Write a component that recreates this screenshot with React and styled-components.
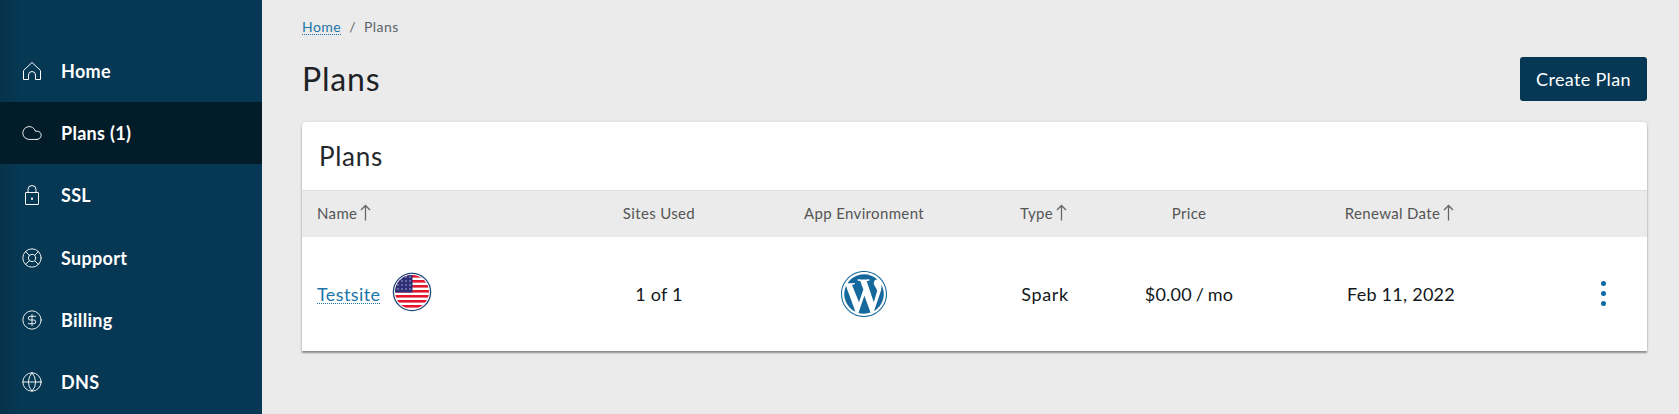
import React from "react";
import styled, { createGlobalStyle } from "styled-components";
import { Cloud, LifeBuoy, CircleDollarSign, Globe } from "lucide-react";

const Global = createGlobalStyle`
  html, body { margin: 0; padding: 0; height: 414px; overflow: hidden; background: #ebebeb; }
  body { font-family: "Lato", "Open Sans", sans-serif; }
`;
const Page = styled.div`display: flex; width: 1679px; height: 414px; overflow: hidden;`;
const Sidebar = styled.nav`
  width: 262px; flex: none; padding-top: 40px; box-sizing: border-box;
  background: linear-gradient(90deg, #053349 0, #063753 20px, #063755 100%);
`;
const NavItem = styled.div`
  display: flex; align-items: center; height: 62.2px; padding-left: 20px; gap: 17px;
  background: ${p => (p.$active ? "#031c29" : "transparent")};
  color: #fff; font-size: 18px; font-weight: 700; letter-spacing: .3px;
`;
const IconBox = styled.span`
  display: flex; align-items: center; justify-content: center; width: 24px; height: 24px; flex: none;
`;
const Main = styled.main`flex: 1; padding: 0 32px 0 40px; min-width: 0;`;
const Crumbs = styled.div`
  display: flex; gap: 8px; padding-top: 18px; height: 18px; line-height: 18px;
  font-size: 14px; letter-spacing: .45px; color: #5b646b;
`;
const Link = styled.a`
  color: #1b75a8; text-decoration: underline dotted; text-underline-offset: 2px;
  text-decoration-thickness: 1px;
`;
const TitleRow = styled.div`
  display: flex; justify-content: space-between; align-items: flex-start; height: 86px; padding-top: 21px;
  box-sizing: border-box;
`;
const Title = styled.h1`
  margin: 0; font-size: 32px; line-height: 44px; font-weight: 400; letter-spacing: .8px; color: #1d2227;
`;
const Button = styled.button`
  width: 127px; height: 44px; border: 0; border-radius: 3px; background: #063755; color: #fff; padding: 0;
  font: 400 18px "Lato", sans-serif; letter-spacing: .35px;
`;
const Card = styled.section`
  background: #fff; border-radius: 4px 4px 0 0; height: 229px; overflow: hidden;
  box-shadow: 0 2px 2px rgba(0,0,0,.38), 0 0 3px rgba(0,0,0,.1);
`;
const CardTitle = styled.h2`
  margin: 0; height: 68px; line-height: 68px; padding-left: 17px; font-size: 26px; font-weight: 400;
  letter-spacing: .7px; color: #23282d; box-sizing: border-box;
`;
const Row = styled.div`
  display: grid; grid-template-columns: 238px 238px 172px 190px 98px 326px 83px; align-items: center;
`;
const HeadRow = styled(Row)`
  height: 47px; background: #ebebeb; border-top: 1px solid #dedede; box-sizing: border-box; padding-bottom: 3px;
  font-size: 15px; letter-spacing: .35px; color: #555;
`;
const BodyRow = styled(Row)`height: 114px; font-size: 18px; letter-spacing: .4px; color: #14181b;`;
const Cell = styled.div`
  display: flex; align-items: center; justify-content: ${p => (p.$left ? "flex-start" : "center")};
  padding-left: ${p => (p.$left ? "15px" : "0")}; gap: ${p => (p.$gap || 0)}px;
`;
const ArrowCell = styled(Cell)`padding-right: 3px;`;
const Compact = styled.span`letter-spacing: ${p => p.$spacing}px; word-spacing: ${p => p.$words}px;`;
const FlagWrap = styled.span`display: flex; margin: 0 0 4px 0;`;
const KebabCell = styled(Cell)`padding-right: 4px;`;
const Kebab = styled.div`display: flex; flex-direction: column; gap: 4.7px; margin-bottom: 1px;`;
const Dot = styled.span`width: 5.5px; height: 5.5px; border-radius: 50%; background: #0b6ba6;`;
const ArrowIcon = styled.svg`margin-left: 3px; flex: none;`;

const HomeIcon = () => (
  <svg width="24" height="24" viewBox="0 0 24 24" fill="none" stroke="currentColor" strokeWidth="1">
    <path d="M3.5 20.5v-9L12 3.5l8.500 8v9h-5v-4.500a3.500 3.500 0 0 0-7 0v4.500z" strokeLinejoin="round" />
  </svg>
);
const LockIcon = () => (
  <svg width="24" height="24" viewBox="0 0 24 24" fill="none" stroke="currentColor" strokeWidth="1">
    <rect x="5.500" y="9.500" width="13" height="12" rx=".5" />
    <path d="M8 9.500V6.500a4 4 0 0 1 8 0v3" />
    <path d="M12 14.500v2.500" strokeWidth="1.600" />
  </svg>
);
const CloudIcon = () => <Cloud size={22} strokeWidth={1} />;
const BuoyIcon = () => <LifeBuoy size={22} strokeWidth={1} />;
const DollarIcon = () => <CircleDollarSign size={22} strokeWidth={1} />;
const GlobeIcon = () => <Globe size={22} strokeWidth={1} />;
const Flag = () => (
  <svg width="40" height="40" viewBox="0 0 40 40">
    <defs><clipPath id="fc"><circle cx="20" cy="20" r="17" /></clipPath></defs>
    <circle cx="20" cy="20" r="19.500" fill="#eee" />
    <circle cx="20" cy="20" r="18.600" fill="#fff" stroke="#1f4a7c" strokeWidth="1.300" />
    <g clipPath="url(#fc)">
      <rect width="40" height="40" fill="#fff" />
      {[3, 8, 13, 18, 23, 28, 33].map(y => <rect key={y} x="0" y={y} width="40" height="2.600" fill="#e2162e" />)}
      <rect x="2" y="2" width="18.500" height="18.500" fill="#2d2f78" />
      {[5, 9, 13, 17].map(y => [6, 10, 14, 18].map(x => <circle key={x + "-" + y} cx={x} cy={y} r=".7" fill="#c9cbe6" />))}
    </g>
  </svg>
);
const WordPress = () => (
  <svg width="46" height="46" viewBox="0 0 122.500 122.500">
    <g fill="#14689c">
      <path d="M8.700 61.300c0 20.800 12.100 38.800 29.700 47.300L13.300 39.800C10.400 46.400 8.700 53.600 8.700 61.300z" />
      <path d="M96.700 58.600c0-6.500-2.300-11-4.300-14.500-2.700-4.300-5.200-8-5.200-12.300 0-4.800 3.700-9.300 8.800-9.300h.7C87.400 14 74.900 8.700 61.300 8.700c-18.400 0-34.500 9.400-43.900 23.700 1.200 0 2.400.1 3.400.1 5.500 0 14-.7 14-.7 2.800-.2 3.200 4 .3 4.300 0 0-2.800.3-6 .5L48 83.500l11.500-34.400-8.200-22.400c-2.800-.2-5.500-.5-5.500-.5-2.800-.2-2.500-4.500.3-4.300 0 0 8.700.7 13.900.7 5.500 0 14-.7 14-.7 2.800-.2 3.200 4 .3 4.300 0 0-2.900.3-6 .5l19 56.500 5.200-17.500c2.300-7.300 4-12.500 4-17z" />
      <path d="M62.200 65.900l-15.800 45.800c4.700 1.400 9.700 2.100 14.900 2.100 6.100 0 12-1.100 17.500-3-.1-.2-.3-.5-.4-.7z" />
      <path d="M107.400 36.100c.2 1.700.4 3.500.4 5.400 0 5.300-1 11.300-4 18.900l-16.100 46.500c15.700-9.100 26.200-26.100 26.200-45.600 0-9.200-2.300-17.800-6.500-25.200z" />
      <path d="M61.300 0C27.500 0 0 27.500 0 61.300s27.500 61.300 61.300 61.300 61.300-27.500 61.300-61.300S95 0 61.300 0zm0 119.700C29.100 119.700 2.800 93.500 2.800 61.300S29.100 2.800 61.300 2.800s58.400 26.200 58.400 58.400-26.200 58.500-58.400 58.500z" />
    </g>
  </svg>
);
const Arrow = () => (
  <ArrowIcon width="11" height="17" viewBox="0 0 11 17" fill="none" stroke="#666" strokeWidth="1.300">
    <path d="M5.500 16.500V1.500M1 6l4.500-4.500L10 6" />
  </ArrowIcon>
);
const nav = [
  ["Home", HomeIcon], ["Plans (1)", CloudIcon, true], ["SSL", LockIcon], ["Support", BuoyIcon],
  ["Billing", DollarIcon], ["DNS", GlobeIcon],
];

export default function App() {
  return (
    <Page>
      <Global />
      <Sidebar>
        {nav.map(([label, Icon, active]) => (
          <NavItem key={label} $active={active}>
            <IconBox><Icon /></IconBox>
            {label}
          </NavItem>
        ))}
      </Sidebar>
      <Main>
        <Crumbs><Link>Home</Link><span>/</span><span>Plans</span></Crumbs>
        <TitleRow>
          <Title>Plans</Title>
          <Button>Create Plan</Button>
        </TitleRow>
        <Card>
          <CardTitle>Plans</CardTitle>
          <HeadRow>
            <Cell $left>Name<Arrow /></Cell>
            <Cell>Sites Used</Cell>
            <Cell>App Environment</Cell>
            <ArrowCell>Type<Arrow /></ArrowCell>
            <Cell>Price</Cell>
            <ArrowCell>Renewal Date<Arrow /></ArrowCell>
            <Cell />
          </HeadRow>
          <BodyRow>
            <Cell $left $gap={12}><Link>Testsite</Link><FlagWrap><Flag /></FlagWrap></Cell>
            <Cell><Compact $spacing={.2} $words={0}>1 of 1</Compact></Cell>
            <Cell><WordPress /></Cell>
            <Cell><Compact $spacing={.6} $words={0}>Spark</Compact></Cell>
            <Cell><Compact $spacing={.2} $words={-1}>$0.00 / mo</Compact></Cell>
            <Cell><Compact $spacing={.25} $words={0}>Feb 11, 2022</Compact></Cell>
            <KebabCell><Kebab><Dot /><Dot /><Dot /></Kebab></KebabCell>
          </BodyRow>
        </Card>
      </Main>
    </Page>
  );
}
